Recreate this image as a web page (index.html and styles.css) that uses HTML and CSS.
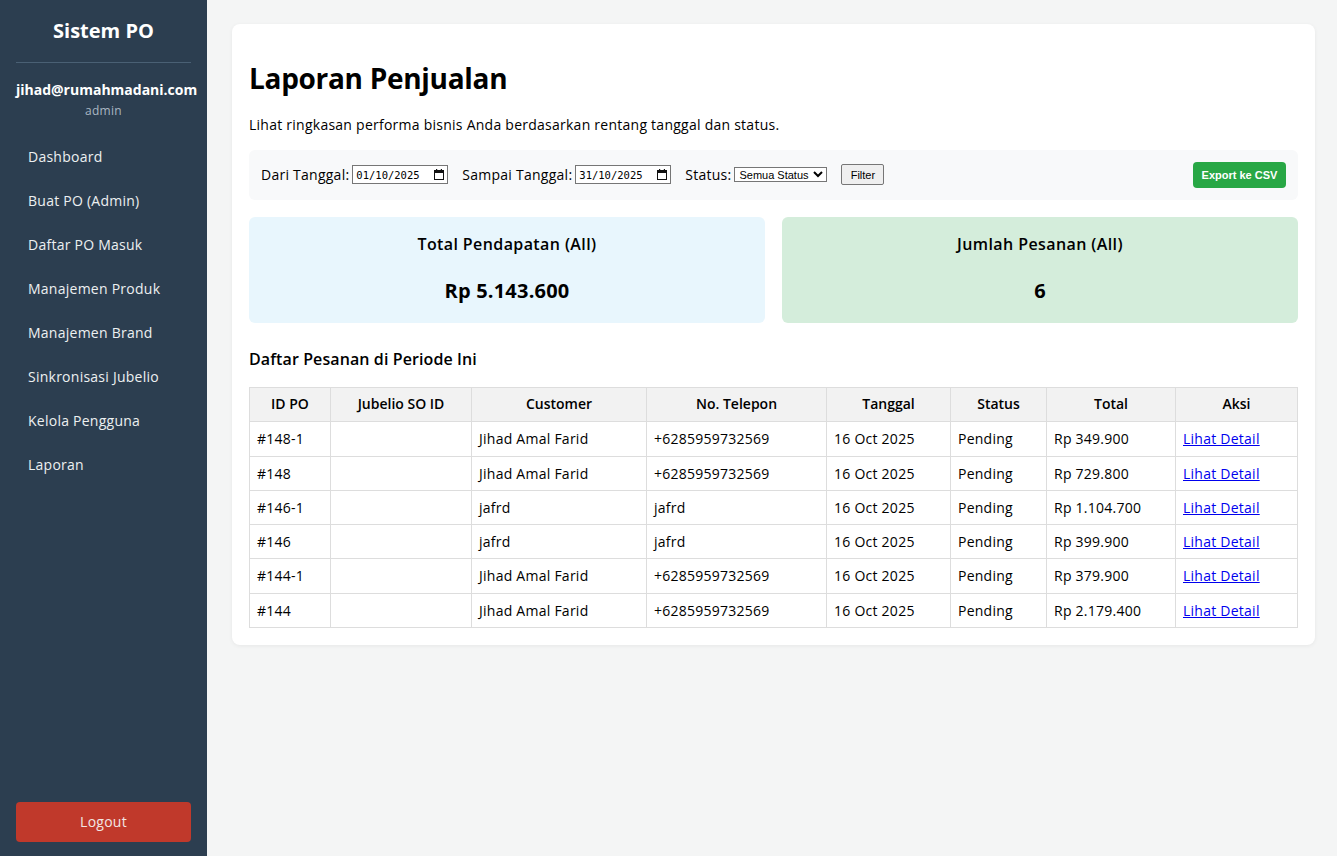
FILE: index.html
```html
<!DOCTYPE html>
<html lang="id">
<head>
<meta charset="utf-8">
<title>Laporan Penjualan - Sistem PO</title>
<link rel="stylesheet" href="styles.css">
</head>
<body>
<div class="layout">
  <aside class="sidebar">
    <h2 class="brand">Sistem PO</h2>
    <div class="user">
      <div class="user-email">jihad@rumahmadani.com</div>
      <div class="user-role">admin</div>
    </div>
    <nav class="nav">
      <a href="#">Dashboard</a>
      <a href="#">Buat PO (Admin)</a>
      <a href="#">Daftar PO Masuk</a>
      <a href="#">Manajemen Produk</a>
      <a href="#">Manajemen Brand</a>
      <a href="#">Sinkronisasi Jubelio</a>
      <a href="#">Kelola Pengguna</a>
      <a href="#">Laporan</a>
    </nav>
    <button class="logout">Logout</button>
  </aside>
  <main class="main">
    <div class="card">
      <h1 class="title">Laporan Penjualan</h1>
      <p class="subtitle">Lihat ringkasan performa bisnis Anda berdasarkan rentang tanggal dan status.</p>
      <form class="filters">
        <label class="flabel">Dari Tanggal:</label>
        <span class="date">
          <input class="date-text" type="text" value="01/10/2025">
          <svg class="cal" width="10" height="11" viewBox="0 0 10 11"><rect x="0.5" y="1.5" width="9" height="9" fill="none" stroke="#111" stroke-width="1"/><rect x="0.5" y="1.5" width="9" height="2.5" fill="#111"/><rect x="2" y="0" width="1.2" height="2" fill="#111"/><rect x="6.8" y="0" width="1.2" height="2" fill="#111"/></svg>
        </span>
        <label class="flabel">Sampai Tanggal:</label>
        <span class="date">
          <input class="date-text" type="text" value="31/10/2025">
          <svg class="cal" width="10" height="11" viewBox="0 0 10 11"><rect x="0.5" y="1.5" width="9" height="9" fill="none" stroke="#111" stroke-width="1"/><rect x="0.5" y="1.5" width="9" height="2.5" fill="#111"/><rect x="2" y="0" width="1.2" height="2" fill="#111"/><rect x="6.8" y="0" width="1.2" height="2" fill="#111"/></svg>
        </span>
        <label class="flabel">Status:</label>
        <select class="status"><option>Semua Status</option></select>
        <button class="btn-filter" type="button">Filter</button>
        <button class="btn-export" type="button">Export ke CSV</button>
      </form>
      <div class="stats">
        <div class="stat stat-blue">
          <h3>Total Pendapatan (All)</h3>
          <div class="stat-value">Rp 5.143.600</div>
        </div>
        <div class="stat stat-green">
          <h3>Jumlah Pesanan (All)</h3>
          <div class="stat-value">6</div>
        </div>
      </div>
      <h3 class="section-title">Daftar Pesanan di Periode Ini</h3>
      <table class="orders">
        <colgroup>
          <col class="c1"><col class="c2"><col class="c3"><col class="c4"><col class="c5"><col class="c6"><col class="c7"><col class="c8">
        </colgroup>
        <thead>
          <tr><th>ID PO</th><th>Jubelio SO ID</th><th>Customer</th><th>No. Telepon</th><th>Tanggal</th><th>Status</th><th>Total</th><th>Aksi</th></tr>
        </thead>
        <tbody>
          <tr><td>#148-1</td><td></td><td>Jihad Amal Farid</td><td>+6285959732569</td><td>16 Oct 2025</td><td>Pending</td><td>Rp 349.900</td><td><a href="#">Lihat Detail</a></td></tr>
          <tr><td>#148</td><td></td><td>Jihad Amal Farid</td><td>+6285959732569</td><td>16 Oct 2025</td><td>Pending</td><td>Rp 729.800</td><td><a href="#">Lihat Detail</a></td></tr>
          <tr><td>#146-1</td><td></td><td>jafrd</td><td>jafrd</td><td>16 Oct 2025</td><td>Pending</td><td>Rp 1.104.700</td><td><a href="#">Lihat Detail</a></td></tr>
          <tr><td>#146</td><td></td><td>jafrd</td><td>jafrd</td><td>16 Oct 2025</td><td>Pending</td><td>Rp 399.900</td><td><a href="#">Lihat Detail</a></td></tr>
          <tr><td>#144-1</td><td></td><td>Jihad Amal Farid</td><td>+6285959732569</td><td>16 Oct 2025</td><td>Pending</td><td>Rp 379.900</td><td><a href="#">Lihat Detail</a></td></tr>
          <tr><td>#144</td><td></td><td>Jihad Amal Farid</td><td>+6285959732569</td><td>16 Oct 2025</td><td>Pending</td><td>Rp 2.179.400</td><td><a href="#">Lihat Detail</a></td></tr>
        </tbody>
      </table>
    </div>
  </main>
</div>
</body>
</html>
```
FILE: styles.css
```css
* { box-sizing: border-box; }
html, body { margin: 0; padding: 0; height: 100%; }
body {
  font-family: "Open Sans", "Liberation Sans", sans-serif;
  font-size: 14px;
  color: #000;
  background: #f4f5f5;
  letter-spacing: 0.25px;
}
.layout { display: flex; height: 856px; }

.sidebar {
  width: 207px;
  flex: 0 0 207px;
  background: #2c3e50;
  color: #ecf0f1;
  display: flex;
  flex-direction: column;
  padding: 16px 16px 14px;
}
.brand {
  margin: 0;
  font-size: 20px;
  line-height: 30px;
  font-weight: 700;
  text-align: center;
  color: #fff;
  letter-spacing: 0;
  padding-bottom: 16px;
  border-bottom: 1px solid #4a6074;
}
.user { text-align: center; margin-top: 16px; }
.user-email { font-size: 14px; font-weight: 700; line-height: 21px; color: #fff; letter-spacing: 0; }
.user-role { font-size: 12px; line-height: 18px; color: #aab6c2; margin-top: 2px; }
.nav { display: flex; flex-direction: column; margin-top: 15px; }
.nav a {
  display: block;
  padding: 12px 12px;
  line-height: 20px;
  font-size: 14px;
  color: #ecf0f1;
  text-decoration: none;
}
.logout {
  margin-top: auto;
  height: 40px;
  border: none;
  border-radius: 4px;
  background: #c0392b;
  color: #f2e6e4;
  font-family: inherit;
  font-size: 14px;
  letter-spacing: 0.25px;
  padding: 0 0 2px;
}

.main { flex: 1; padding: 24px 24px 24px 25px; }
.card {
  background: #fff;
  border-radius: 8px;
  box-shadow: 0 1px 4px rgba(0,0,0,0.06);
  padding: 17px 17px 17px;
}
.title {
  margin: 17px 0 0;
  font-size: 28px;
  line-height: 40px;
  font-weight: 700;
  letter-spacing: -0.3px;
}
.subtitle { margin: 16px 0 15px; line-height: 21px; font-size: 14px; }

.filters {
  display: flex;
  align-items: center;
  height: 50px;
  padding: 0 12px 1px;
  background: #f8f9fa;
  border-radius: 6px;
  margin: 0 0 17px;
}
.flabel { font-size: 14px; margin-right: 3px; }
.date {
  display: inline-flex;
  align-items: center;
  width: 96px;
  height: 19px;
  padding: 0 3px 0 3px;
  border: 1px solid #767676;
  background: #fff;
  margin-right: 14px;
}
.date-text {
  width: 76px;
  border: none;
  padding: 0;
  margin: 0;
  outline: none;
  background: transparent;
  font-family: "DejaVu Sans Mono", monospace;
  font-size: 10.5px;
  letter-spacing: 0;
  color: #000;
}
.cal { margin-left: auto; display: block; }
.status {
  width: 93px;
  height: 15px;
  padding: 0;
  font-family: "Liberation Sans", Arial, sans-serif;
  font-size: 11px;
  letter-spacing: 0;
  border: 1px solid #767676;
  border-radius: 0;
  background: #fff;
  margin-right: 14px;
}
.btn-filter {
  height: 21px;
  width: 43px;
  padding: 0;
  font-family: "Liberation Sans", Arial, sans-serif;
  font-size: 11px;
  letter-spacing: 0;
  background: #efefef;
  border: 1px solid #767676;
  border-radius: 2px;
}
.btn-export {
  margin-left: auto;
  height: 26px;
  width: 93px;
  padding: 0;
  border: none;
  border-radius: 4px;
  background: #28a745;
  color: #fff;
  font-family: "Liberation Sans", Arial, sans-serif;
  font-weight: 700;
  font-size: 11px;
  letter-spacing: 0;
}

.stats { display: flex; gap: 17px; }
.stat {
  flex: 1;
  height: 106px;
  border-radius: 6px;
  text-align: center;
  padding: 15px 17px 17px;
}
.stat-blue { background: #e8f6fd; }
.stat-green { background: #d4eddb; }
.stat h3 { margin: 0; font-size: 16px; line-height: 24px; font-weight: 600; letter-spacing: 0.4px; }
.stat-value { margin-top: 20px; font-size: 20px; line-height: 30px; font-weight: 700; letter-spacing: 0.2px; }

.section-title { margin: 24px 0 16px; font-size: 16px; line-height: 24px; font-weight: 600; letter-spacing: 0.1px; }

.orders {
  width: 100%;
  border-collapse: collapse;
  table-layout: fixed;
}
.c1 { width: 81px; } .c2 { width: 141px; } .c3 { width: 175px; } .c4 { width: 180px; }
.c5 { width: 124px; } .c6 { width: 96px; } .c7 { width: 129px; } .c8 { width: 122px; }
.orders th, .orders td {
  border: 1px solid #ddd;
  padding: 6px 7px;
  line-height: 21.3px;
  font-size: 14px;
  text-align: left;
  white-space: nowrap;
}
.orders th { background: #f2f2f2; text-align: center; font-weight: 600; letter-spacing: 0; padding-top: 5px; padding-bottom: 7px; }
.orders td a { color: #0000ee; text-decoration: underline; }
```
